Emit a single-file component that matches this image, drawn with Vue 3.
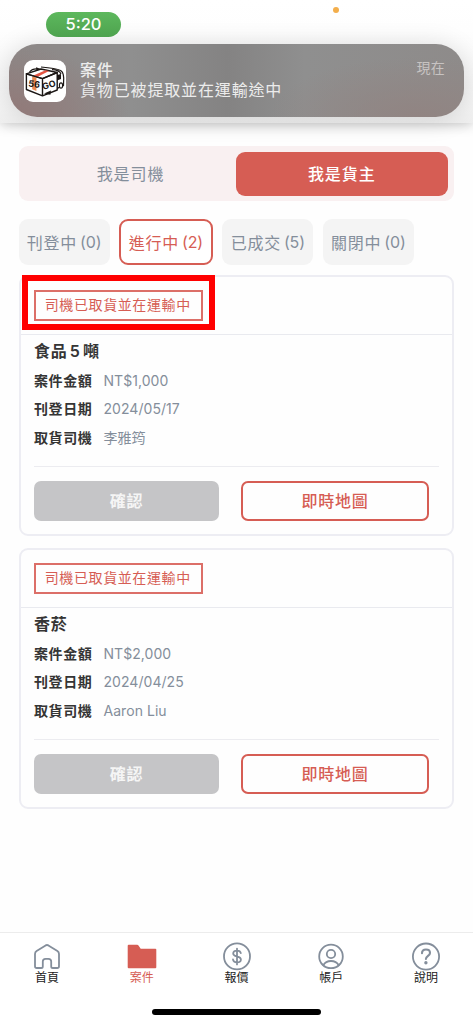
<script setup>
const tabs = [
  { label: '刊登中', count: 0 },
  { label: '進行中', count: 2, active: true },
  { label: '已成交', count: 5 },
  { label: '關閉中', count: 0 },
]
const cases = [
  { title: '食品 5 噸', rows: [['案件金額', 'NT$1,000'], ['刊登日期', '2024/05/17'], ['取貨司機', '李雅筠']], marked: true },
  { title: '香菸', rows: [['案件金額', 'NT$2,000'], ['刊登日期', '2024/04/25'], ['取貨司機', 'Aaron Liu']] },
]
const nav = [
  { icon: 'home', label: '首頁' },
  { icon: 'folder', label: '案件', active: true },
  { icon: 'dollar', label: '報價' },
  { icon: 'user', label: '帳戶' },
  { icon: 'help', label: '說明' },
]
</script>

<template>
  <div class="screen">
    <header class="top">
      <div class="status">
        <span class="clock">5:20</span>
        <i class="mic"></i>
      </div>
      <div class="banner">
        <svg class="logo" viewBox="0 0 42 42">
          <rect width="42" height="42" rx="9" fill="#fff" />
          <path d="M2.4 13.8 17 9 33.2 12.5 18.5 18.6Z" fill="#fff" stroke="#1c1715" stroke-width="1.4" stroke-linejoin="round" />
          <path d="M8.2 16.2 12.4 17.6V31L8.2 29.2Z" fill="#ec8a52" />
          <path d="M9.5 15.6 21.5 10.2 25 11 13.3 16.9Z" fill="#e55442" />
          <path d="M2.4 13.8V29.5L18.5 35.8V18.6ZM18.5 18.6 33.2 12.5V30L18.5 35.8" fill="none" stroke="#1c1715" stroke-width="1.4" stroke-linejoin="round" />
          <path d="M5.5 12.2C7.5 9.4 10.5 8.8 13.5 9M17 7C25 7.6 33 8.6 36.5 10.5Q39.5 12 39.7 18L39.5 25.5 33.2 28.4M28 9.6C33 9.8 36 11.5 37 14" fill="none" stroke="#1c1715" stroke-width="1.2" />
          <path d="M12 7.2 17 9 12.5 10.8ZM20 33.6 27 30.6 26.4 34.8ZM33 15 37 14V19L33 20.4Z" fill="#1c1715" />
          <ellipse cx="37" cy="25.6" rx="1.6" ry="2.7" fill="#fff" stroke="#1c1715" stroke-width="1.1" />
          <text x="4.2" y="26.6" transform="rotate(7 4 26)" class="mark">56</text>
          <text x="19.2" y="30" transform="rotate(-17 19 30)" class="mark">GO</text>
        </svg>
        <div class="message">
          <b>案件</b>
          <span>貨物已被提取並在運輸途中</span>
        </div>
        <span class="now">現在</span>
      </div>
    </header>

    <main>
      <div class="roles">
        <span class="role">我是司機</span>
        <span class="role chosen">我是貨主</span>
      </div>
      <div class="tabs">
        <span v-for="t in tabs" :key="t.label" class="tab" :class="{ active: t.active }">{{ t.label }} <em>({{ t.count }})</em></span>
      </div>
      <section v-for="c in cases" :key="c.title" class="card">
        <div class="card-head">
          <span class="tag">司機已取貨並在運輸中</span>
          <i v-if="c.marked" class="marker"></i>
        </div>
        <div class="card-body">
          <h2>{{ c.title }}</h2>
          <div v-for="r in c.rows" :key="r[0]" class="row"><b>{{ r[0] }}</b><span>{{ r[1] }}</span></div>
          <div class="actions">
            <span class="btn disabled">確認</span>
            <span class="btn map">即時地圖</span>
          </div>
        </div>
      </section>
    </main>

    <nav>
      <div v-for="n in nav" :key="n.label" class="item" :class="{ active: n.active }">
        <svg viewBox="0 0 30 30" fill="none" stroke="#848e9b" stroke-width="1.8" stroke-linejoin="round" stroke-linecap="round">
          <path v-if="n.icon === 'home'" d="M4.8 27H9.2Q10.8 27 10.8 25.4V20.6Q10.8 17.8 13.6 17.8H16.4Q19.2 17.8 19.2 20.6V25.4Q19.2 27 20.8 27H25.2Q27 27 27 25.2V12.9Q27 11 25.4 10L16.4 4.4Q15 3.6 13.6 4.4L4.6 10Q3 11 3 12.9V25.2Q3 27 4.8 27Z" />
          <path v-else-if="n.icon === 'folder'" d="M.7 4.7Q.7 3.7 1.7 3.7H10.2Q11 3.7 11.5 4.5L13.7 7.7H28.4Q29.3 7.7 29.3 8.6V26.2Q29.3 27.2 28.3 27.2H1.7Q.7 27.2.7 26.2Z" fill="#d65d54" stroke="none" />
          <template v-else-if="n.icon === 'dollar'">
            <circle cx="15" cy="15.4" r="13" />
            <path d="M15 7.6V23.4M18.8 12.2C18.5 10.4 17 9.6 15 9.6C12.8 9.6 11.2 10.7 11.2 12.5C11.2 16.6 18.9 14.2 18.9 18.5C18.9 20.3 17.2 21.4 15 21.4C12.8 21.4 11.2 20.4 11 18.5" />
          </template>
          <template v-else-if="n.icon === 'user'">
            <circle cx="15" cy="15.4" r="11.8" />
            <circle cx="15" cy="13" r="4.2" />
            <path d="M7.3 24.2C9 21.1 11.7 20 15 20S21 21.1 22.7 24.2" />
          </template>
          <template v-else>
            <circle cx="15" cy="15.6" r="13.1" />
            <path d="M11 12.2C11 9.7 12.7 8.5 15 8.5S19 9.8 19 11.9C19 14.8 14.9 14.9 14.9 18" stroke-width="2.1" />
            <circle cx="14.9" cy="21.8" r=".8" fill="#848e9b" />
          </template>
        </svg>
        <span>{{ n.label }}</span>
      </div>
      <i class="home-bar"></i>
    </nav>
  </div>
</template>

<style>
body { background: #fefefe; }
</style>

<style scoped>
* { box-sizing: border-box; }
.screen { width: 473px; height: 1024px; display: flex; flex-direction: column; overflow: hidden; background: #fefefe; color: #848e9b; font-family: Inter, "Noto Sans CJK TC", sans-serif; white-space: nowrap; }
.top { height: 123px; flex: none; padding: 12px 9px 0; background: linear-gradient(#fff 0, #fefefe 30px, #f3f3f3 110px, #efefef); box-shadow: 0 1px 12px rgba(0, 0, 0, .24); }
.status { height: 32px; display: flex; align-items: flex-start; padding-left: 37px; }
.clock { width: 75px; height: 25px; border-radius: 13px; background: linear-gradient(#5db85d, #4ea34f); color: #fff; font-size: 16.5px; font-weight: 450; line-height: 25px; text-align: center; }
.mic { width: 6px; height: 6px; border-radius: 50%; background: #f3ae4b; margin: -5px 0 0 212px; }
.banner { height: 73px; border-radius: 28px; padding: 15px 19px 0 15px; display: flex; background: radial-gradient(ellipse 120px 70px at 0 100%, #927978, transparent), radial-gradient(ellipse 150px 60px at 90% 100%, #918482, transparent), linear-gradient(90deg, #8d8786, #8f8f8f 27%, #848383 48%, #8f8f8f 65%, #8e8b8a); box-shadow: 0 2px 26px rgba(0, 0, 0, .14); }
.logo { width: 42px; height: 42px; margin-top: 1px; flex: none; }
.mark { font: bold 9px Inter, sans-serif; fill: #1c1715; }
.message { display: flex; flex-direction: column; margin-left: 14px; color: #ececec; font-size: 16px; line-height: 20px; letter-spacing: .85px; padding-top: 1px; }
.message b { font-weight: 500; }
.now { margin-left: auto; color: #c7c3c2; font-size: 14px; line-height: 18px; letter-spacing: .3px; }
main { flex: 1; padding: 23px 19px 0 18.5px; }
.roles { height: 55px; border-radius: 9px; background: #f9f0f1; display: grid; grid-template-columns: 1fr 211.5px; padding: 6px 6.5px 5.5px; color: #848e9b; }
.role { display: flex; align-items: center; justify-content: center; padding-bottom: 2.5px; border-radius: 9px; font-size: 16px; letter-spacing: .9px; }
.chosen { background: #d65d54; color: #fff; font-weight: 500; }
.tabs { display: flex; gap: 9.3px; margin-top: 18px; }
.tab { width: 91.2px; height: 46px; padding-bottom: 1px; border-radius: 9px; background: #f4f4f4; display: flex; align-items: center; justify-content: center; gap: 3px; font-size: 16px; letter-spacing: .7px; }
.tab em { font-style: normal; letter-spacing: -.1px; }
.tab.active { width: 94px; background: #fff; border: 2px solid #d65d54; color: #d65d54; }
.card { height: 261px; margin-top: 10px; border: 2px solid #ededf3; border-radius: 9px; }
.card + .card { margin-top: 12px; }
.card-head { position: relative; height: 58px; padding: 13px 0 0 13.5px; border-bottom: 1px solid #e9eaef; }
.tag { display: block; width: 169px; height: 31px; padding-right: 1.5px; border: 2px solid #dc6f68; color: #d65d54; font-size: 14px; line-height: 26px; letter-spacing: .6px; text-align: center; }
.marker { position: absolute; left: 1.5px; top: -2px; width: 193px; height: 55px; border: 6px solid #f00; }
.card-body { padding: 3px 13px 0 13.5px; color: #353535; }
h2 { margin: 0; font-size: 16px; font-weight: 600; line-height: 26px; height: 28.8px; letter-spacing: .7px; word-spacing: -2.3px; }
.row { display: flex; height: 28.4px; line-height: 28.4px; align-items: center; font-size: 14px; }
.row b { width: 69.5px; font-weight: 600; letter-spacing: .6px; }
.row span { color: #848e9b; letter-spacing: .05px; }
.actions { display: flex; justify-content: space-between; margin-top: 14px; border-top: 1px solid #ececf0; padding: 14px 10px 0 0; }
.btn { display: flex; align-items: center; justify-content: center; height: 40px; width: 185px; padding-bottom: 2px; border-radius: 7px; font-size: 16px; font-weight: 600; letter-spacing: .8px; }
.disabled { background: #c5c5c7; color: #f5f5f5; }
.map { width: 188px; border: 2px solid #d65d54; color: #d65d54; font-weight: 500; }
nav { position: relative; height: 92px; flex: none; border-top: 1px solid #ececec; display: flex; justify-content: space-between; padding: 8px 17px 0; background: #fff; }
.item { width: 60px; display: flex; flex-direction: column; align-items: center; color: #222; font-size: 12px; line-height: 14px; }
.item svg { width: 30px; height: 30px; }
.item.active { color: #d65d54; }
.home-bar { position: absolute; left: 152px; bottom: 9px; width: 169px; height: 6px; border-radius: 3px; background: #000; }
</style>
